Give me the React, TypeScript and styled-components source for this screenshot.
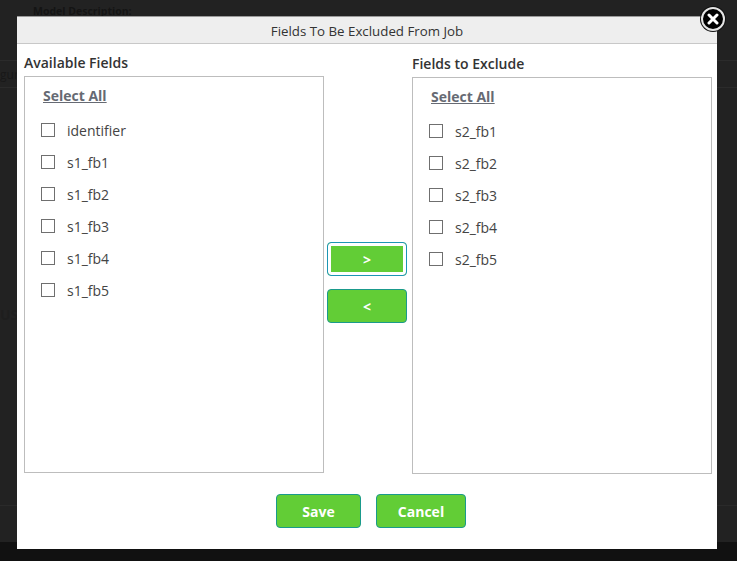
import React from 'react';
import styled, { createGlobalStyle } from 'styled-components';

const GlobalStyle = createGlobalStyle`
  html, body {
    margin: 0;
    padding: 0;
    height: 100%;
    overflow: hidden;
    background: #222222;
    font-family: 'Open Sans', 'Liberation Sans', sans-serif;
  }
`;

const Page = styled.div`
  width: 737px;
  height: 561px;
  display: flex;
  flex-direction: column;
  background: #222222;
  overflow: hidden;
  position: relative;
`;

const BackLabel = styled.div`
  padding: 3px 0 0 33px;
  height: 60px;
  box-sizing: border-box;
  font-size: 10.5px;
  font-weight: 700;
  line-height: 16px;
  color: #141414;
`;

const BackRow = styled.div`
  height: 28px;
  box-sizing: border-box;
  border-top: 1px solid #2b2b2b;
  border-bottom: 1px solid #2b2b2b;
  font-size: 12px;
  line-height: 27px;
  color: #181818;
`;

const BackStatus = styled.div`
  margin-top: 219px;
  font-size: 14px;
  font-weight: 700;
  line-height: 16px;
  color: #1e1e1e;
`;

const BackRule = styled.div`
  margin-top: 182px;
  height: 36px;
  border-top: 1px solid #2a2a2a;
`;

const BackFooter = styled.div`
  flex: 1;
  background: #111111;
`;

const Modal = styled.div`
  position: absolute;
  left: 17px;
  top: 16px;
  width: 700px;
  height: 533px;
  display: flex;
  flex-direction: column;
  background: #ffffff;
`;

const TitleBar = styled.div`
  height: 28px;
  box-sizing: border-box;
  border-top: 1px solid #9a9a9a;
  border-bottom: 1px solid #c8c8c8;
  background: #eeeeee;
  text-align: center;
  font-size: 13.3px;
  line-height: 28px;
  color: #333333;
`;

const CloseButton = styled.button`
  position: absolute;
  right: -8px;
  top: -9px;
  width: 24px;
  height: 24px;
  padding: 0;
  border: 2px solid #e4e4e4;
  border-radius: 50%;
  background: #000000;
  display: flex;
  align-items: center;
  justify-content: center;
  box-sizing: border-box;
  box-shadow: 0 0 0 1px #111111;
`;

const Columns = styled.div`
  display: flex;
  padding: 0 5px 0 7px;
`;

const Column = styled.div<{ $offset: number }>`
  width: 300px;
  padding-top: ${(p) => p.$offset}px;
`;

const ColumnTitle = styled.div`
  height: 23px;
  font-size: 14px;
  font-weight: 600;
  line-height: 19px;
  color: #333333;
`;

const FieldBox = styled.div`
  height: 397px;
  box-sizing: border-box;
  border: 1px solid #bdbdbd;
  padding: 9px 0 0 17px;
`;

const SelectAll = styled.a`
  display: block;
  font-size: 14px;
  font-weight: 700;
  line-height: 19px;
  color: #666a73;
  text-decoration: underline;
  margin: 0 0 9px 1px;
`;

const FieldRow = styled.label`
  display: flex;
  align-items: center;
  height: 32px;
  margin-left: -1px;
  font-size: 14px;
  color: #444444;
`;

const CheckSquare = styled.span`
  width: 14px;
  height: 14px;
  box-sizing: border-box;
  border: 1px solid #6f6f6f;
  margin-right: 12px;
  flex: none;
`;

const Transfer = styled.div`
  width: 88px;
  box-sizing: border-box;
  display: flex;
  flex-direction: column;
  align-items: center;
  gap: 13px;
  padding: 198px 2px 0 0;
`;

const GreenButton = styled.button<{ $focused?: boolean; $width: number; $size: number }>`
  width: ${(p) => p.$width}px;
  height: 34px;
  box-sizing: border-box;
  border: 1px solid ${(p) => (p.$focused ? '#1c96b4' : '#1a9a8c')};
  border-radius: 4px;
  background: #62cd36;
  color: #ffffff;
  font-family: inherit;
  font-weight: 700;
  font-size: ${(p) => p.$size}px;
  padding: 0;
  box-shadow: ${(p) => (p.$focused ? 'inset 0 0 0 3px #ffffff' : 'none')};
`;

const Actions = styled.div`
  display: flex;
  justify-content: center;
  gap: 15px;
  padding: 20px 0 0 8px;
`;

const available = ['identifier', 's1_fb1', 's1_fb2', 's1_fb3', 's1_fb4', 's1_fb5'];
const excluded = ['s2_fb1', 's2_fb2', 's2_fb3', 's2_fb4', 's2_fb5'];

const FieldList: React.FC<{ title: string; fields: string[]; offset: number }> = ({ title, fields, offset }) => (
  <Column $offset={offset}>
    <ColumnTitle>{title}</ColumnTitle>
    <FieldBox>
      <SelectAll>Select All</SelectAll>
      {fields.map((f) => (
        <FieldRow key={f}>
          <CheckSquare />
          {f}
        </FieldRow>
      ))}
    </FieldBox>
  </Column>
);

const App: React.FC = () => {
  return (
    <Page>
      <GlobalStyle />
      <BackLabel>Model Description:</BackLabel>
      <BackRow>gur</BackRow>
      <BackStatus>US</BackStatus>
      <BackRule />
      <BackFooter />
      <Modal>
        <TitleBar>Fields To Be Excluded From Job</TitleBar>
        <CloseButton aria-label="Close">
          <svg width="12" height="12" viewBox="0 0 12 12">
            <path d="M2 2 L10 10 M10 2 L2 10" stroke="#ffffff" strokeWidth="3" strokeLinecap="round" />
          </svg>
        </CloseButton>
        <Columns>
          <FieldList title="Available Fields" fields={available} offset={9} />
          <Transfer>
            <GreenButton $focused $width={80} $size={14}>&gt;</GreenButton>
            <GreenButton $width={80} $size={14}>&lt;</GreenButton>
          </Transfer>
          <FieldList title="Fields to Exclude" fields={excluded} offset={10} />
        </Columns>
        <Actions>
          <GreenButton $width={85} $size={14}>Save</GreenButton>
          <GreenButton $width={90} $size={14}>Cancel</GreenButton>
        </Actions>
      </Modal>
    </Page>
  );
};

export default App;
